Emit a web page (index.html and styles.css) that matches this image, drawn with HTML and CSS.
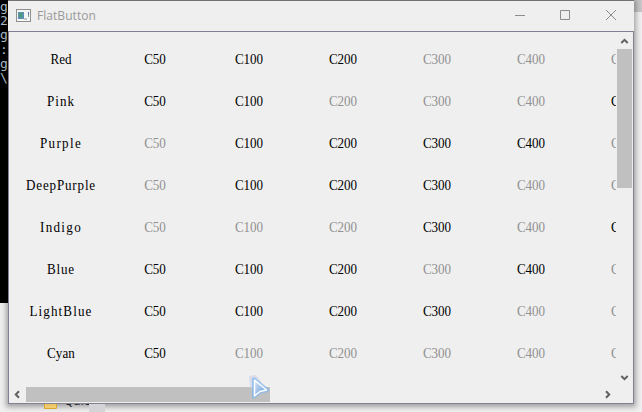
FILE: index.html
```html
<!DOCTYPE html>
<html lang="en">
<head>
<meta charset="utf-8">
<title>FlatButton</title>
<link rel="stylesheet" href="styles.css">
</head>
<body>
<div class="desktop">
  <div class="top-strip"></div>
  <div class="shadow"></div>
  <pre class="console">g
2
g
:
g
\</pre>
  <svg class="folder" width="13" height="9" viewBox="0 0 13 9"><path d="M.5 0v8.500h12V0" fill="#f0cd72" stroke="#d9aa32"/><path d="M2 5h9" stroke="#e5bd55"/></svg>
  <div class="folder-name">Qule</div>
  <div class="folder-tail"></div>
  <div class="window">
    <header class="titlebar">
      <svg class="app-icon" width="15" height="13" viewBox="0 0 15 13"><path fill="#8f8f8f" d="M0 0h15v13H0z"/><path fill="#f6f6f6" d="M1 1h13v11H1z"/><path fill="#5b91ad" d="M2 3h6v7H2z"/><path fill="#4d9a7c" d="M3 4h3v4H3z"/><path fill="#c9c9c9" d="M8 9h3v2H8z"/><path fill="#5872bd" d="M12 3h1v3h-1z"/><path fill="#75b875" d="M12 6h1v2h-1z"/></svg>
      <span class="title">FlatButton</span>
      <div class="controls">
        <svg width="46" height="29" viewBox="0 0 46 29"><path d="M19 14.500h10"/></svg>
        <svg width="46" height="29" viewBox="0 0 46 29"><path d="M18.500 9.500h9v9h-9z"/></svg>
        <svg width="46" height="29" viewBox="0 0 46 29"><path d="M18 9l10 10M28 9L18 19"/></svg>
      </div>
    </header>
    <main class="body">
      <div class="viewport"><div class="grid" id="grid"></div></div>
      <div class="vbar">
        <svg width="15" height="17" viewBox="0 0 15 17"><path d="M4.300 11L7.500 7.800L10.700 11"/></svg>
        <div class="vtrack"><div class="vthumb"></div></div>
        <svg width="15" height="17" viewBox="0 0 15 17"><path d="M4.300 6L7.500 9.200L10.700 6"/></svg>
      </div>
      <div class="hbar">
        <svg width="17" height="15" viewBox="0 0 17 15"><path d="M10 4.300L6.800 7.500L10 10.700"/></svg>
        <div class="htrack"><div class="hthumb"></div></div>
        <svg width="17" height="15" viewBox="0 0 17 15"><path d="M6 4.300l3.200 3.200L6 10.700"/></svg>
      </div>
    </main>
  </div>
  <svg class="cursor" width="24" height="26" viewBox="0 0 24 26">
    <defs><linearGradient id="fill" x1="0" y1="0" x2="1" y2="1"><stop offset="0" stop-color="#e0e8f5"/><stop offset="1" stop-color="#5795dc"/></linearGradient></defs>
    <path d="M2 2L7 1L12 7L8 16L3 11z" fill="#d6d8e8" stroke="#d6d8e8" stroke-width="2" stroke-linejoin="round" opacity=".8"/>
    <path d="M6 4.500L19 15L12 16.500L6 21.500z" fill="url(#fill)" stroke="#83b8ec" stroke-opacity=".8" stroke-width="4" stroke-linejoin="round"/>
    <path d="M6.500 5L18.500 15L12 16.500L6.500 21z" fill="url(#fill)" stroke="#fff" stroke-width="1.500" stroke-linejoin="round"/>
  </svg>
</div>
<script src="grid.js"></script>
</body>
</html>
```
FILE: styles.css
```css
body { margin: 0; overflow: hidden; background: #efefef; }
.desktop { position: relative; width: 642px; height: 412px; overflow: hidden; background: #efefef; }
.top-strip { position: absolute; left: 0; top: 0; width: 642px; height: 12px; background: linear-gradient(to right, #000 8px, #8d8b8d 8px, #8d8b8d 634px, #c6c6c6 634px); }
.shadow { position: absolute; left: 8px; top: 1px; width: 626px; height: 403px; box-shadow: 0 1px 5px 2px rgba(0,0,0,.32); }
.console { position: absolute; left: 0; top: 0; width: 8px; height: 303px; margin: 0; overflow: hidden; background: #000; color: #a6bac5; font: 13px/14.2px "DejaVu Sans Mono", monospace; }
.folder { position: absolute; left: 44px; top: 400px; }
.folder-name { position: absolute; left: 64px; top: 394px; font: 12px/14px "Open Sans", sans-serif; color: #222; }
.folder-tail { position: absolute; left: 89px; top: 404px; width: 16px; height: 8px; background: #d3d3d8; }
.window { position: absolute; left: 8px; top: 1px; width: 626px; height: 403px; display: flex; flex-direction: column; background: #efefef; }
.titlebar { display: flex; align-items: center; height: 30px; box-sizing: border-box; padding-left: 8px; }
.app-icon { margin-bottom: 2px; }
.title { margin: 0 0 0 6px; color: #999; font: 12px/16px "Open Sans", sans-serif; letter-spacing: .05px; }
.controls { display: flex; margin-left: auto; height: 29px; align-self: flex-start; }
.controls path { fill: none; stroke: #8c8c8c; stroke-width: 1; }
.body { box-sizing: border-box; width: 626px; height: 373px; border: 1px solid #818193; display: grid; grid-template: 355px 16px / 608px 16px; }
.viewport { overflow: hidden; width: 607px; }
.grid { display: grid; grid-template-columns: repeat(7, 94px); grid-auto-rows: 42px; padding: 6px 0 0 5px; width: 663px; }
.cell { display: flex; align-items: center; justify-content: center; color: #000; font: 15px/18px "Liberation Serif", serif; white-space: pre; transform: scaleX(.87); }
.cell.off { color: #919191; }
.shade { letter-spacing: -.05px; }
.vbar { display: flex; flex-direction: column; width: 15px; height: 355px; }
.vtrack { flex: 1; }
.vthumb { height: 139px; background: #c0c0c0; }
.hbar { display: flex; width: 608px; height: 15px; }
.htrack { flex: 1; }
.hthumb { width: 244px; height: 15px; background: #c0c0c0; }
.vbar path, .hbar path { fill: none; stroke: #606060; stroke-width: 2; }
.cursor { position: absolute; left: 248px; top: 375px; }
```
FILE: grid.js
```js
// Each row: name and enabled flags for C50..C500.
const rows = [
  ["Red", "111000"],
  ["Pink", "110001"],
  ["Purple", "011110"],
  ["DeepPurple", "011100"],
  ["Indigo", "000101"],
  ["Blue", "111010"],
  ["LightBlue", "111100"],
  ["Cyan", "100000"]
];
const shades = ["C50", "C100", "C200", "C300", "C400", "C500"];
const grid = document.getElementById("grid");
const pen = document.createElement("canvas").getContext("2d");
pen.font = '15px "Liberation Serif"';

function cell(text, className) {
  const el = document.createElement("div");
  el.className = className;
  el.textContent = text;
  grid.append(el);
  return el;
}

// Names take 7px per character after the horizontal scale.
function spacing(name) {
  return (name.length * 7 / 0.87 - pen.measureText(name).width) / name.length;
}

for (const [name, flags] of rows) {
  cell(name, "cell").style.letterSpacing = spacing(name).toFixed(2) + "px";
  shades.forEach((shade, i) => cell(shade, "cell shade" + (flags[i] === "1" ? "" : " off")));
}
```
